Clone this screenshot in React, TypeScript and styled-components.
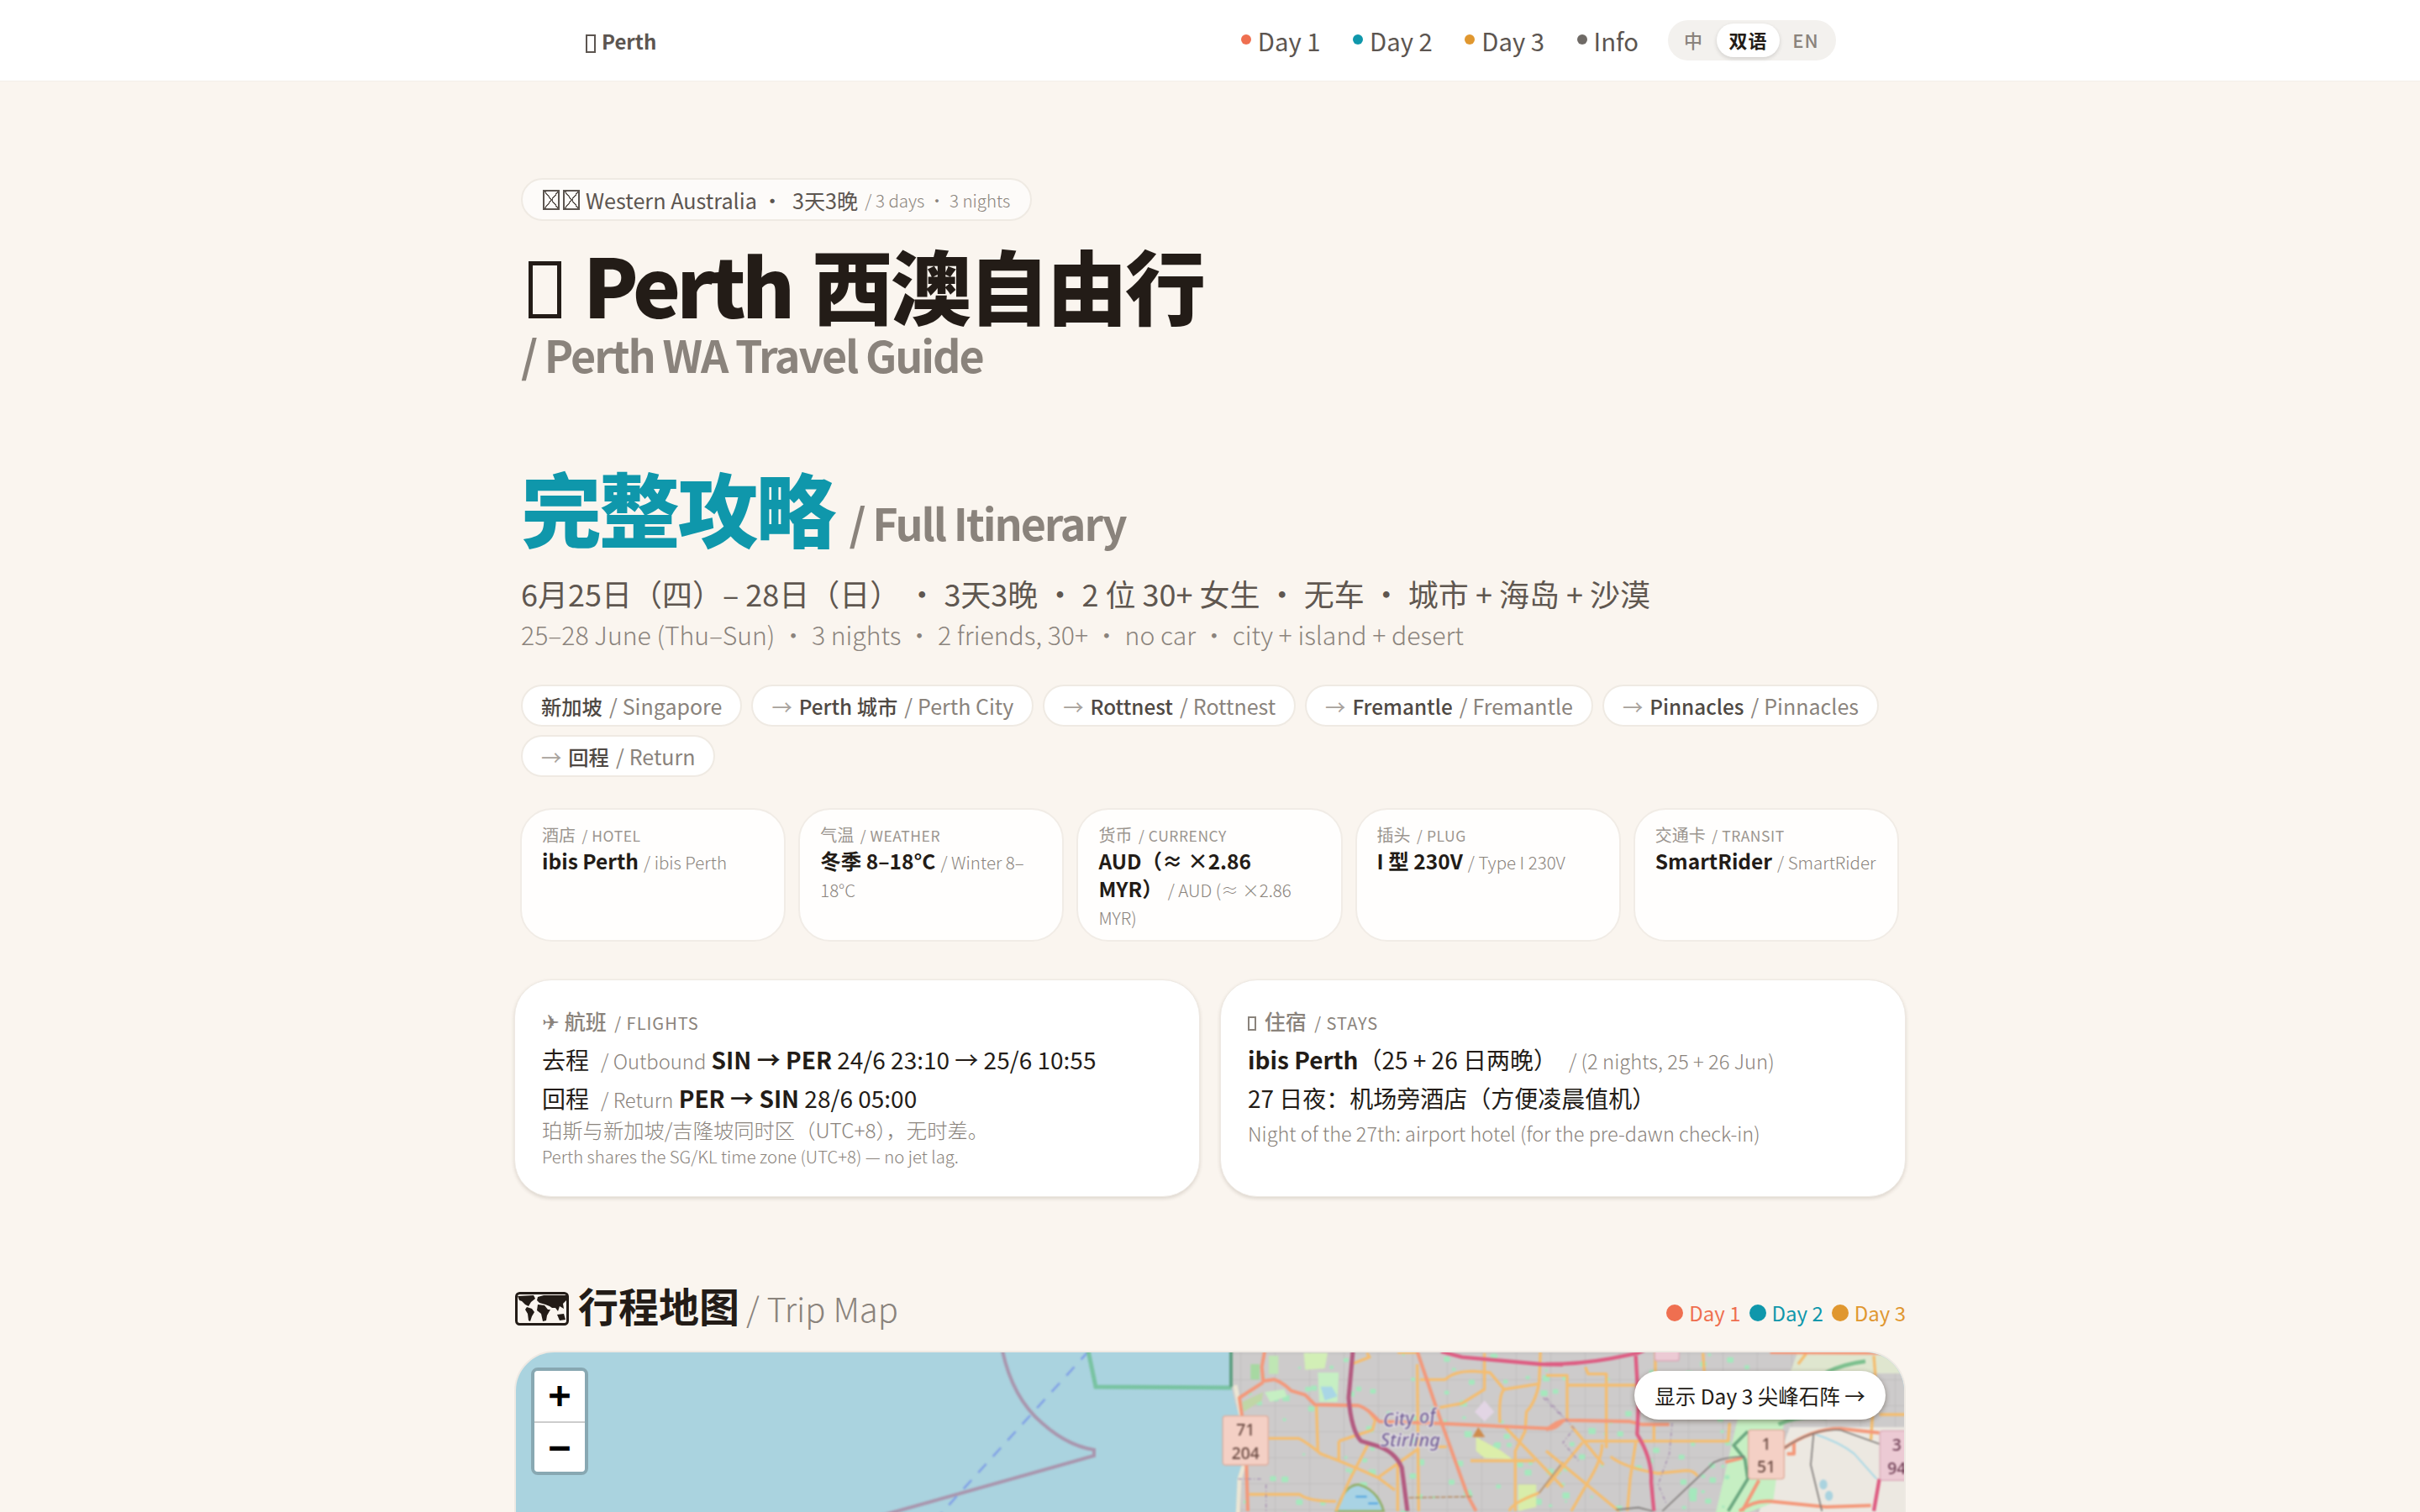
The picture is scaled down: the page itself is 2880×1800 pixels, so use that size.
import React from 'react';
import styled, { createGlobalStyle } from 'styled-components';

const GlobalStyle = createGlobalStyle`
  html, body {
    margin: 0;
    padding: 0;
    background: #faf5ef;
    color: #231c17;
    font-family: "Noto Sans CJK SC", "Noto Sans", sans-serif;
  }
  * { box-sizing: border-box; }
`;

const colors = { coral: '#ef6f50', teal: '#0f97ab', amber: '#e0972f', gray: '#6f6a66' };

const Page = styled.div`
  height: 1800px;
  overflow: hidden;
`;

const Nav = styled.nav`
  height: 97px;
  background: #fff;
  border-bottom: 1px solid #f3efe9;
`;

const NavInner = styled.div`
  width: 1490px;
  height: 96px;
  margin-left: 695px;
  display: flex;
  align-items: center;
  justify-content: space-between;
`;

const Brand = styled.div`
  font-size: 24px;
  font-weight: 600;
  color: #5c5550;
`;

const NavRight = styled.div`
  display: flex;
  align-items: center;
`;

const NavLink = styled.a`
  display: flex;
  align-items: center;
  font-size: 29.3px;
  color: #5c5550;
  margin-right: 38.5px;
`;

const Dot = styled.span<{ $color: string; $size?: number; $lift?: number; $gap?: number }>`
  display: inline-block;
  width: ${(p) => p.$size ?? 12}px;
  height: ${(p) => p.$size ?? 12}px;
  border-radius: 50%;
  background: ${(p) => p.$color};
  margin-right: ${(p) => p.$gap ?? 8}px;
  transform: translateY(${(p) => p.$lift ?? 0}px);
`;

// fallback box that stands in for a glyph the font lacks
const Tofu = styled.span<{ $w: number; $h: number; $line: number; $drop?: number; $left?: number; $right?: number; $cross?: boolean }>`
  display: inline-block;
  width: ${(p) => p.$w}px;
  height: ${(p) => p.$h}px;
  border: ${(p) => p.$line}px solid currentColor;
  vertical-align: ${(p) => -(p.$drop ?? 0)}px;
  margin-left: ${(p) => p.$left ?? 0}px;
  margin-right: ${(p) => p.$right ?? 0}px;
  background: ${(p) =>
    p.$cross
      ? `linear-gradient(to top right, transparent 48%, currentColor 48%, currentColor 54%, transparent 54%),
         linear-gradient(to bottom right, transparent 48%, currentColor 48%, currentColor 54%, transparent 54%)`
      : 'none'};
`;

const LangSwitch = styled.div`
  width: 200px;
  height: 48px;
  margin-left: -3.5px;
  border-radius: 24px;
  background: #f3f1ee;
  display: flex;
  align-items: center;
  padding: 0 3px;
`;

const LangBtn = styled.span<{ $w: number; $active?: boolean }>`
  height: 40px;
  line-height: 38px;
  text-align: center;
  font-size: 22px;
  letter-spacing: 1px;
  border-radius: 20px;
  width: ${(p) => p.$w}px;
  font-weight: ${(p) => (p.$active ? 600 : 500)};
  color: ${(p) => (p.$active ? '#231c17' : '#8a837c')};
  background: ${(p) => (p.$active ? '#fff' : 'transparent')};
  box-shadow: ${(p) => (p.$active ? '0 2px 5px rgba(0,0,0,.14)' : 'none')};
`;

const Main = styled.main`
  width: 1656px;
  margin: 0 auto;
`;

const Hero = styled.header`
  padding: 115px 8px 0;
`;

const Eyebrow = styled.div`
  display: inline-flex;
  align-items: center;
  height: 51px;
  padding: 0 24px;
  border: 2px solid #efeae3;
  border-radius: 26px;
  background: rgba(255, 255, 255, 0.6);
  font-size: 25.2px;
  color: #5c5550;
  white-space: pre;
`;

const EyebrowEn = styled.span`
  font-size: 20.5px;
  font-weight: 300;
  color: #8a837c;
  margin-left: 8px;
`;

const Title = styled.h1`
  margin: 22px 0 0;
  font-size: 96px;
  line-height: 106px;
  font-weight: 900;
  letter-spacing: -0.03em;
  color: #231c17;
`;

const TitleLatin = styled.span`
  letter-spacing: -0.05em;
  margin-right: 6px;
`;

const TitleEn = styled.div`
  font-size: 52px;
  line-height: 62px;
  font-weight: 600;
  letter-spacing: -0.04em;
  color: #8a837c;
`;

const Section = styled.section`
  padding: 97px 8px 0;
`;

const SectionTitle = styled.h2`
  margin: 0;
  font-size: 96px;
  line-height: 106px;
  font-weight: 900;
  letter-spacing: -0.03em;
  color: ${colors.teal};
`;

const SectionTitleEn = styled.span`
  font-size: 52px;
  font-weight: 600;
  letter-spacing: -0.04em;
  color: #8a837c;
  margin-left: 18px;
`;

const Subtitle = styled.p`
  margin: 7px 0 0;
  font-size: 36px;
  line-height: 49px;
  color: #5f5750;
  white-space: pre;
`;

const SubtitleEn = styled.p`
  margin: 2px 0 0;
  font-size: 30.2px;
  line-height: 45px;
  font-weight: 300;
  color: #8a837c;
  white-space: pre;
`;

const RouteRow = styled.div`
  margin-top: 37px;
  display: flex;
  flex-wrap: wrap;
  gap: 10px 11px;
`;

const RoutePill = styled.span`
  height: 50px;
  padding: 0 22px;
  display: inline-flex;
  align-items: center;
  background: #fff;
  border: 2px solid #efeae3;
  border-radius: 25px;
  font-size: 24.3px;
  font-weight: 500;
  color: #4f4944;
  white-space: pre;
`;

const Arrow = styled.span`
  color: #a8a29c;
  font-weight: 400;
  margin-right: 8px;
`;

const RouteEn = styled.span`
  font-size: 25px;
  color: #8a837c;
  font-weight: 400;
  margin-left: 8px;
`;

const RouteSlash = styled.span`
  margin-right: 6px;
`;

const FactGrid = styled.div`
  margin-top: 37px;
  display: grid;
  grid-template-columns: repeat(5, 1fr);
  gap: 15px;
  margin-left: -1px;
`;

const FactCard = styled.div`
  height: 159px;
  padding: 16px 24px;
  background: #fffefd;
  border: 2px solid #f1ece6;
  border-radius: 38px;
  overflow: hidden;
`;

const FactLabel = styled.div`
  font-size: 20px;
  line-height: 27px;
  color: #9b958f;
  white-space: pre;
`;

const FactLabelEn = styled.span`
  font-size: 17.5px;
  letter-spacing: 0.03em;
  margin-left: 3px;
`;

const FactValue = styled.div`
  font-size: 24.5px;
  line-height: 33px;
  font-weight: 700;
  color: #231c17;
`;

const FactValueEn = styled.span`
  font-size: 20.5px;
  line-height: 1;
  font-weight: 300;
  color: #8a837c;
  margin-left: 6px;
`;

const PanelRow = styled.div`
  margin-top: 45px;
  display: grid;
  grid-template-columns: 1fr 1fr;
  gap: 24px;
`;

const Panel = styled.div`
  height: 259px;
  padding: 29px 32px;
  background: #fff;
  border-radius: 44px;
  border: 1px solid #eee9e3;
  box-shadow: 0 2px 4px rgba(70, 50, 30, 0.16);
`;

const PanelLabel = styled.div`
  font-size: 25px;
  line-height: 38px;
  font-weight: 500;
  color: #8a837c;
  white-space: pre;
`;

const PanelLabelEn = styled.span`
  font-size: 20px;
  font-weight: 400;
  letter-spacing: 0.05em;
  margin-left: 4px;
`;

const PanelLine = styled.div`
  font-size: 28px;
  line-height: 46px;
  color: #231c17;
  white-space: pre;
  margin-top: 1px;
  & + & { margin-top: 0; }
`;

const PanelEn = styled.span`
  font-size: 23.8px;
  line-height: 1;
  font-weight: 300;
  color: #8a837c;
  margin-left: 14px;
`;

const Strong = styled.strong`
  font-weight: 700;
`;

const PanelNote = styled.div`
  font-size: 24.3px;
  line-height: 30px;
  color: #8a837c;
  font-weight: 300;
  white-space: pre;
`;

const PanelNoteEn = styled.div`
  font-size: 20.3px;
  line-height: 32px;
  color: #8a837c;
  font-weight: 300;
  white-space: pre;
`;

const PanelNoteWide = styled.div`
  font-size: 23.5px;
  line-height: 38px;
  color: #8a837c;
  font-weight: 300;
  white-space: pre;
`;

const MapHead = styled.div`
  margin-top: 98px;
  height: 65px;
  display: flex;
  align-items: center;
  justify-content: space-between;
`;

const MapTitle = styled.h3`
  margin: 0;
  font-size: 48px;
  font-weight: 700;
  line-height: 65px;
  color: #231c17;
  white-space: pre;
`;

const MapTitleEn = styled.span`
  font-size: 40px;
  font-weight: 300;
  color: #8a837c;
  margin-left: -3px;
`;

const MapIcon = styled.svg`
  width: 64px;
  height: 40px;
  margin-left: 1px;
  margin-right: 11px;
  vertical-align: -4px;
`;

const Legend = styled.div`
  display: flex;
  align-items: center;
  gap: 10px;
  font-size: 24px;
  margin-top: 14px;
`;

const LegendItem = styled.span<{ $color: string }>`
  display: inline-flex;
  align-items: center;
  color: ${(p) => p.$color};
`;

const MapFrame = styled.div`
  position: relative;
  margin-top: 20px;
  height: 420px;
  border-radius: 48px;
  border: 2px solid #eee9e3;
  overflow: hidden;
  background: #aad3df;
`;

const Tiles = styled.svg`
  position: absolute;
  left: -2px;
  top: -2px;
  width: 1656px;
  height: 420px;
  filter: blur(0.8px);
`;

const ZoomControl = styled.div`
  position: absolute;
  left: 18px;
  top: 18px;
  width: 68px;
  border: 4px solid rgba(0, 0, 0, 0.2);
  border-radius: 8px;
  overflow: hidden;
  background-clip: padding-box;
`;

const ZoomBtn = styled.div`
  height: 60px;
  background: #fff;
  color: #000;
  text-align: center;
  font-family: "DejaVu Sans Mono", monospace;
  font-size: 44px;
  font-weight: 700;
  line-height: 58px;
  & + & { border-top: 2px solid #ccc; }
`;

const ShowButton = styled.button`
  position: absolute;
  right: 22px;
  top: 22px;
  width: 299px;
  height: 58px;
  border: none;
  border-radius: 29px;
  background: #fff;
  font-family: inherit;
  font-size: 24.5px;
  color: #231c17;
  white-space: pre;
  box-shadow: 0 2px 6px rgba(40, 25, 10, 0.4);
`;

const routes = [
  { cn: '新加坡', en: 'Singapore', first: true },
  { cn: 'Perth 城市', en: 'Perth City' },
  { cn: 'Rottnest', en: 'Rottnest' },
  { cn: 'Fremantle', en: 'Fremantle' },
  { cn: 'Pinnacles', en: 'Pinnacles' },
  { cn: '回程', en: 'Return' },
];

const facts = [
  { label: '酒店', labelEn: 'HOTEL', value: 'ibis Perth', en: 'ibis Perth' },
  { label: '气温', labelEn: 'WEATHER', value: '冬季 8–18°C', en: 'Winter 8–18°C' },
  { label: '货币', labelEn: 'CURRENCY', value: 'AUD（≈ ×2.86 MYR）', en: 'AUD (≈ ×2.86 MYR)' },
  { label: '插头', labelEn: 'PLUG', value: 'I 型 230V', en: 'Type I 230V' },
  { label: '交通卡', labelEn: 'TRANSIT', value: 'SmartRider', en: 'SmartRider' },
];

// scattered park specks on the tile layer
const specks: [number, number, number][] = [];
let seed = 7;
const rnd = () => {
  seed = (seed * 16807) % 2147483647;
  return seed / 2147483647;
};
for (let i = 0; i < 130; i++) {
  specks.push([1480 + rnd() * 600, 1612 + rnd() * 190, 1.5 + rnd() * 3]);
}

const primary = { fill: 'none', stroke: '#f4987a', strokeWidth: 12, strokeLinejoin: 'round' as const };
const secondary = { fill: 'none', stroke: '#f5bd6f', strokeWidth: 10, strokeLinejoin: 'round' as const };
const motorway = { fill: 'none', stroke: '#de5c82', strokeWidth: 13, strokeLinejoin: 'round' as const };
const rail = { fill: 'none', stroke: '#7d7977', strokeWidth: 5 };
const river = { fill: 'none', stroke: '#6aa67f', strokeWidth: 11 };
const boundary = { fill: 'none', stroke: '#a58db0', strokeWidth: 4, strokeDasharray: '14 8 4 8' };

const Shield = ({ x, y, w, h, a, b, pink }: { x: number; y: number; w: number; h: number; a?: string; b: string; pink?: boolean }) => (
  <g>
    <rect x={x} y={y} width={w} height={h} rx={10} fill={pink ? '#eccad4' : '#f4d0c5'} stroke={pink ? '#d9a9b8' : '#dfac9c'} strokeWidth={4} />
    <g fontFamily='"Noto Sans", sans-serif' fontSize={58} fontWeight={500} textAnchor="middle" fill={pink ? '#6f3f55' : '#6a4a42'}>
      {a && <text x={x + w / 2} y={y + 70}>{a}</text>}
      <text x={x + w / 2} y={y + h - 22}>{b}</text>
    </g>
  </g>
);

const WorldIcon = () => (
  <MapIcon viewBox="0 0 64 40">
    <rect x="1.5" y="1.5" width="61" height="37" rx="4" fill="none" stroke="#231c17" strokeWidth="3" />
    <g fill="#231c17">
      <path d="M3 5 L22 4 L24 8 L19 12 L16 17 L12 15 L8 11 L5 10 Z" />
      <path d="M14 18 L20 20 L23 24 L20 29 L18 35 L16 34 L15 26 L12 21 Z" />
      <path d="M27 6 L34 4 L61 4 L61 10 L57 14 L58 20 L53 17 L51 23 L48 19 L44 19 L41 17 L36 15 L29 13 L26 10 Z" />
      <path d="M27 15 L35 16 L39 21 L42 21 L38 28 L37 34 L33 35 L31 26 L26 22 Z" />
      <path d="M50 27 L58 26 L60 33 L53 34 Z" />
    </g>
  </MapIcon>
);

const TileLayer = () => (
  <Tiles viewBox="612 1609 1656 420" preserveAspectRatio="none">
    <defs>
      <pattern id="streets" x="0" y="0" width="41" height="31" patternUnits="userSpaceOnUse">
        <rect width="41" height="31" fill="#cdcbcb" />
        <path d="M0 0H41M0 0V31" stroke="#b7b5b5" strokeWidth="1.2" fill="none" />
      </pattern>
    </defs>
    {/* sea lines */}
    <path d="M1193 1609 Q1205 1665 1240 1695 Q1270 1722 1302 1727 L1302 1734 L1050 1805" fill="none" stroke="#a995ad" strokeWidth="4" />
    <path d="M1296 1609 L1118 1805" fill="none" stroke="#7f9fe6" strokeWidth="2.5" strokeDasharray="14 12" />
    <path d="M1295 1609 L1304 1652 L1466 1653" fill="none" stroke="#79c3a2" strokeWidth="5" />

    {/* land */}
    <path d="M1465 1600 L1465 1650 L1470 1672 L1477 1692 L1482 1740 L1475 1760 L1473 1810 L2280 1810 L2280 1600 Z" fill="url(#streets)" />
    <path d="M1470 1650 L1478 1692 L1482 1740 L1475 1762 L1473 1810" fill="none" stroke="#ece6d4" strokeWidth="5" />
    <path d="M1465 1609 L1465 1652" stroke="#5f9f82" strokeWidth="4" fill="none" />
    <path d="M2130 1700 L2280 1700 L2280 1810 L2090 1810 Z" fill="#ece8e1" />
    <path d="M2140 1609 L2280 1609 L2280 1636 L2130 1636 Z" fill="#dfe6cf" />
    <path d="M2068 1690 L2125 1680 L2110 1790 L2060 1810 L2040 1810 Z" fill="#c6efc3" />
    {specks.map(([x, y, r], i) => (
      <rect key={i} x={x} y={y} width={r * 2} height={r * 1.7} rx={1} fill="#a5e8bd" />
    ))}

    {/* west half: drawn in crop units of 1/3 px */}
    <g transform="translate(1420 1605) scale(0.3333)">
      <rect x="205" y="60" width="32" height="55" fill="#a7d8a2" />
      <rect x="270" y="30" width="34" height="65" fill="#bfe6b4" />
      <path d="M395 20 L480 20 L470 75 L400 80 Z" fill="#d2efb6" />
      <path d="M445 90 L520 90 L515 195 L450 195 Z" fill="#c6efc3" />
      <path d="M455 140 L495 140 L515 175 L470 190 Z" fill="#a9d6e6" />
      <path d="M175 195 L250 160 L245 190 L180 230 Z" fill="#c0d6a6" />
      <path d="M255 160 L325 150 L335 175 L275 195 Z" fill="#c6efc3" />
      <path d="M1010 320 L1100 370 L1140 400 L1040 395 L1010 370 Z" fill="#dceeaa" />
      <path d="M1160 490 L1225 490 L1225 570 L1160 585 Z" fill="#d8edaa" />
      <path d="M1040 190 L1075 230 L1040 265 L1005 230 Z" fill="#e2d5e4" />
      <path d="M1018 285 L1042 320 L997 320 Z" fill="#cf8b4c" />
      <path d="M510 585 Q540 490 590 490 Q660 510 680 585 Z" fill="#a9d3e4" stroke="#93b06a" strokeWidth="8" />
      <path d="M580 533H620M625 557H660" stroke="#4fa3e0" strokeWidth="6" />

      <g {...secondary}>
        <path d="M440 208 L445 370" />
        <path d="M270 325 L375 325 Q400 335 455 380 L520 405 L580 430 L660 465 L720 510" />
        <path d="M520 335 L520 405 M520 335 L640 295 L650 260 L625 225" />
        <path d="M625 345 L560 470 L510 585" />
        <path d="M800 60 L805 585" />
        <path d="M810 115 L900 115 Q930 85 1000 85 L1060 90 L1110 150 L1235 130" />
        <path d="M1040 20 L1040 150 L960 200 L880 215" />
        <path d="M1110 150 Q1090 170 1095 270" />
        <path d="M1240 15 L1235 130 Q1220 200 1190 230 L1185 300 L1150 370 L1150 585" />
        <path d="M1110 280 L1320 500" />
        <path d="M990 405 L1220 405" />
        <path d="M660 465 L800 365 M730 420 L730 585 M860 355 L905 355" />
        <path d="M200 525 L380 525 Q410 550 510 550" />
        <path d="M620 20 L630 35 L565 60 M730 18 L800 18" />
        <path d="M1235 520 Q1130 560 1130 585" />
      </g>
      <g {...primary}>
        <path d="M255 15 L245 70 L250 120 L290 115 Q320 125 350 155 L400 170 L435 205 L590 208 Q620 215 665 265 L840 270 L1280 290 Q1300 285 1320 262" />
        <path d="M250 125 L165 180 L175 250 L190 420 L195 585" />
        <path d="M800 15 L880 250 L980 530 L1010 585" />
      </g>
      <path d="M570 15 L555 180 Q565 300 600 335 L650 350 Q720 370 745 430 L765 585" fill="none" stroke="#b35a80" strokeWidth="15" />
      <path d="M885 15 L960 35 L1240 60 L1320 62" {...motorway} />
      <path d="M770 537 L1000 533" fill="none" stroke="#b58f6a" strokeWidth="5" strokeDasharray="18 5" />
      <path d="M1235 520 L1320 410" fill="none" stroke="#b8946d" strokeWidth="6" />
      <path d="M1250 180 L1320 250" {...boundary} />
      <path d="M160 470 L250 470 M260 490 L260 585" {...boundary} />

      <Shield x={106} y={245} w={162} h={175} a="71" b="204" />
      <g fontFamily='"Noto Sans", sans-serif' fontStyle="italic" fontWeight={500} fontSize={66} fill="#6f5c92" stroke="#f3eef4" strokeWidth={6} paintOrder="stroke">
        <text x="680" y="285" transform="rotate(-6 680 285)">City of</text>
        <text x="668" y="355">Stirling</text>
      </g>
    </g>

    {/* east half */}
    <g transform="translate(1840 1605) scale(0.3333)">
      <g {...secondary}>
        <path d="M0 100 L75 100 L75 260 M75 135 L330 135" />
        <path d="M140 70 L150 95 L215 95 L215 360" />
        <path d="M390 0 L390 140 M560 20 L565 90" />
        <path d="M130 335 L650 335 L655 270 M385 270 L385 335" />
        <path d="M0 500 L130 340 M0 370 L260 585 M90 280 L205 420" />
        <path d="M230 390 Q280 430 400 450 L500 440 Q530 440 540 460" />
        <path d="M200 345 Q200 400 150 480 L90 585" />
        <path d="M320 340 L300 470 L290 585" />
        <path d="M1170 30 L1175 90 L1160 330 M900 60 L930 20 M1190 240 L1290 240" />
      </g>
      <path d="M1000 90 Q1060 60 1140 50 M830 275 Q900 240 1000 250" fill="none" stroke="#7cc08e" strokeWidth="14" />
      <path d="M720 300 L670 350 L710 400 L720 470 L650 585" {...river} />
      <path d="M960 310 Q1050 340 1100 380 L1180 470" fill="none" stroke="#a8d8e6" strokeWidth="6" />
      <ellipse cx="990" cy="490" rx="14" ry="18" fill="#aad3df" />
      <ellipse cx="1010" cy="530" rx="14" ry="18" fill="#aad3df" />
      <g {...primary}>
        <path d="M0 295 Q50 255 80 260 L300 265 L340 275 L440 275" />
        <path d="M640 410 L700 395 M860 380 L885 380 L885 340" />
        <path d="M850 360 Q950 290 1050 290 L1190 305" />
        <path d="M760 475 L700 585" />
        <path d="M690 585 Q740 545 800 550 L1000 570 L1160 565" />
        <path d="M800 18 L1200 20" />
      </g>
      <path d="M0 60 Q120 60 230 40 L330 20 L350 10" {...motorway} />
      <path d="M320 30 L330 200 L325 310 Q380 400 375 480 L385 585" {...motorway} />
      <path d="M1190 470 L1170 585" {...motorway} />
      <g {...rail}>
        <path d="M415 585 L600 410 Q640 390 710 390" />
        <path d="M850 360 Q950 290 1050 295 L1190 345" />
        <path d="M955 310 L945 420 L985 585" />
        <path d="M250 580 L330 572 L380 585" />
      </g>
      <path d="M0 180 L100 290 L60 340 L120 410 M450 270 L440 380 L400 490 L430 560" {...boundary} />
      <rect x="388" y="-30" width="87" height="78" rx="8" fill="#eccad4" stroke="#d9a9b8" strokeWidth="4" />
      <Shield x={722} y={295} w={128} h={175} a="1" b="51" />
      <Shield x={1192} y={298} w={120} h={177} a="3" b="94" pink />
    </g>
  </Tiles>
);

const App = () => {
  return (
    <Page>
      <GlobalStyle />
      <Nav>
        <NavInner>
          <Brand>
            <Tofu $w={12} $h={22} $line={2} $drop={4} $left={2} $right={7} />
            Perth
          </Brand>
          <NavRight>
            <NavLink><Dot $color={colors.coral} $lift={-1} />Day 1</NavLink>
            <NavLink><Dot $color={colors.teal} $lift={-1} />Day 2</NavLink>
            <NavLink><Dot $color={colors.amber} $lift={-1} />Day 3</NavLink>
            <NavLink><Dot $color={colors.gray} $lift={-1} />Info</NavLink>
            <LangSwitch>
              <LangBtn $w={55}>中</LangBtn>
              <LangBtn $w={75} $active>双语</LangBtn>
              <LangBtn $w={62}>EN</LangBtn>
            </LangSwitch>
          </NavRight>
        </NavInner>
      </Nav>

      <Main>
        <Hero>
          <Eyebrow>
            <Tofu $w={20} $h={24} $line={2} $cross $right={4} />
            <Tofu $w={20} $h={24} $line={2} $cross $right={7} />
            Western Australia ・  3天3晚<EyebrowEn>/ 3 days ・ 3 nights</EyebrowEn>
          </Eyebrow>
          <Title>
            <Tofu $w={39} $h={68} $line={5} $left={9} $right={7} />
            {' '}<TitleLatin>Perth</TitleLatin> 西澳自由行
          </Title>
          <TitleEn>/ Perth WA Travel Guide</TitleEn>
        </Hero>

        <Section>
          <SectionTitle>
            完整攻略<SectionTitleEn>/ Full Itinerary</SectionTitleEn>
          </SectionTitle>
          <Subtitle>6月25日（四）– 28日（日） ・ 3天3晚 ・ 2 位 30+ 女生 ・ 无车 ・ 城市 + 海岛 + 沙漠</Subtitle>
          <SubtitleEn>25–28 June (Thu–Sun) ・ 3 nights ・ 2 friends, 30+ ・ no car ・ city + island + desert</SubtitleEn>
          <RouteRow>
            {routes.map((r) => (
              <RoutePill key={r.en}>
                {!r.first && <Arrow>→</Arrow>}
                {r.cn}
                <RouteEn><RouteSlash>/</RouteSlash>{r.en}</RouteEn>
              </RoutePill>
            ))}
          </RouteRow>
          <FactGrid>
            {facts.map((f) => (
              <FactCard key={f.label}>
                <FactLabel>
                  {f.label} <FactLabelEn>/ {f.labelEn}</FactLabelEn>
                </FactLabel>
                <FactValue>
                  {f.value}
                  <FactValueEn>/ {f.en}</FactValueEn>
                </FactValue>
              </FactCard>
            ))}
          </FactGrid>
        </Section>

        <PanelRow>
          <Panel>
            <PanelLabel>✈ 航班 <PanelLabelEn>/ FLIGHTS</PanelLabelEn></PanelLabel>
            <PanelLine>去程<PanelEn>/ Outbound</PanelEn> <Strong>SIN → PER</Strong> 24/6 23:10 → 25/6 10:55</PanelLine>
            <PanelLine>回程<PanelEn>/ Return</PanelEn> <Strong>PER → SIN</Strong> 28/6 05:00</PanelLine>
            <PanelNote>珀斯与新加坡/吉隆坡同时区（UTC+8），无时差。</PanelNote>
            <PanelNoteEn>Perth shares the SG/KL time zone (UTC+8) — no jet lag.</PanelNoteEn>
          </Panel>
          <Panel>
            <PanelLabel><Tofu $w={10} $h={17} $line={2} $drop={1} $right={4} /> 住宿 <PanelLabelEn>/ STAYS</PanelLabelEn></PanelLabel>
            <PanelLine><Strong>ibis Perth</Strong>（25 + 26 日两晚）<PanelEn>/ (2 nights, 25 + 26 Jun)</PanelEn></PanelLine>
            <PanelLine>27 日夜：机场旁酒店（方便凌晨值机）</PanelLine>
            <PanelNoteWide>Night of the 27th: airport hotel (for the pre-dawn check-in)</PanelNoteWide>
          </Panel>
        </PanelRow>

        <MapHead>
          <MapTitle><WorldIcon />行程地图 <MapTitleEn>/ Trip Map</MapTitleEn></MapTitle>
          <Legend>
            <LegendItem $color={colors.coral}><Dot $color={colors.coral} $size={20} $gap={7} />Day 1</LegendItem>
            <LegendItem $color={colors.teal}><Dot $color={colors.teal} $size={20} $gap={7} />Day 2</LegendItem>
            <LegendItem $color={colors.amber}><Dot $color={colors.amber} $size={20} $gap={7} />Day 3</LegendItem>
          </Legend>
        </MapHead>
        <MapFrame>
          <TileLayer />
          <ZoomControl>
            <ZoomBtn>+</ZoomBtn>
            <ZoomBtn>−</ZoomBtn>
          </ZoomControl>
          <ShowButton>显示 Day 3 尖峰石阵 →</ShowButton>
        </MapFrame>
      </Main>
    </Page>
  );
};

export default App;
